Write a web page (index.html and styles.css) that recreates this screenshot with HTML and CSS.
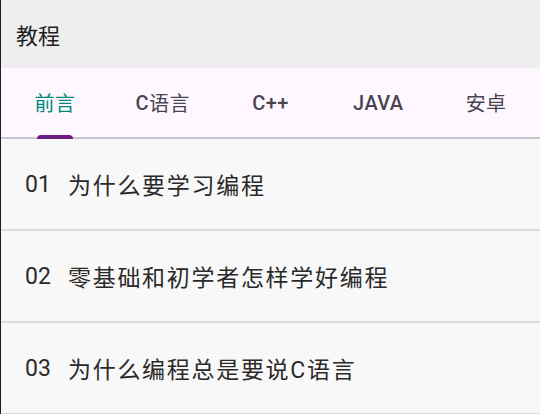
FILE: index.html
```html
<!DOCTYPE html>
<html>

<head>
    <meta charset="UTF-8">
    <meta name="viewport" content="width=device-width, initial-scale=1.0">
    <title>教程</title>
    <link rel="stylesheet" href="styles.css">
</head>

<body>
    <div class="app">
        <header class="toolbar">教程</header>

        <nav class="tabs">
            <div class="tab active">前言<span class="indicator"></span></div>
            <div class="tab"><span class="latin">C</span>语言</div>
            <div class="tab"><span class="latin">C++</span></div>
            <div class="tab"><span class="latin">JAVA</span></div>
            <div class="tab">安卓</div>
        </nav>

        <ul class="list">
            <li class="item"><span class="num">01</span><span class="title">为什么要学习编程</span></li>
            <li class="item"><span class="num">02</span><span class="title">零基础和初学者怎样学好编程</span></li>
            <li class="item"><span class="num">03</span><span class="title">为什么编程总是要说C语言</span></li>
        </ul>
    </div>
</body>

</html>
```

FILE: styles.css
```css
body {
    margin: 0;
    padding: 0;
    font-family: Roboto, "Noto Sans CJK SC", sans-serif;
    background-color: #f8f8f8;
}

.app {
    height: 414px;
    border-left: 1px solid #1f1d2b;
    background-color: #f8f8f8;
    overflow: hidden;
}

.toolbar {
    height: 68px;
    display: flex;
    align-items: center;
    padding-left: 15px;
    background-color: #eeeeee;
    color: #1f1f1f;
    font-size: 22px;
}

.tabs {
    display: flex;
    height: 69px;
    background-color: #fef7ff;
    border-bottom: 2px solid #cac4d0;
}

.tab {
    flex: 1;
    position: relative;
    display: flex;
    align-items: center;
    justify-content: center;
    font-size: 20px;
    letter-spacing: 0.4px;
    color: #49454f;
}

.tab .latin {
    font-weight: 500;
}

.tab.active {
    color: #00897b;
}

.indicator {
    position: absolute;
    left: 36px;
    right: 36px;
    bottom: -2px;
    height: 4px;
    border-radius: 4px 4px 0 0;
    background-color: #6c1d80;
}

.list {
    list-style: none;
    margin: 0;
    padding: 0;
}

.item {
    height: 90px;
    display: flex;
    align-items: center;
    padding-left: 24px;
    border-bottom: 2px solid #dcdcdc;
    color: #2a2a2a;
    font-size: 23px;
}

.num {
    width: 43px;
}

.title {
    letter-spacing: 1.7px;
}
```
